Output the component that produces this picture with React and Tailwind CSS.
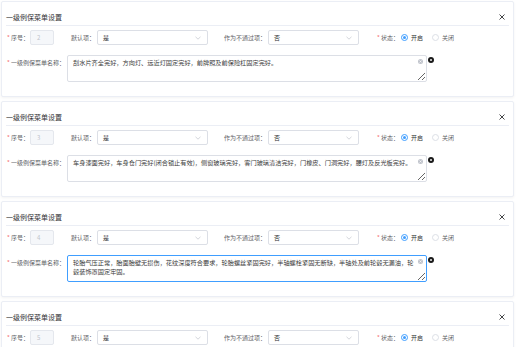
import React from 'react';

const cards = [
  {
    no: '2',
    text: '刮水片齐全完好，方向灯、远近灯固定完好，前牌照及前保险杠固定完好。',
    focus: false,
  },
  {
    no: '3',
    text: '车身漆面完好，车身仓门完好(闭合锁止有效)，侧窗玻璃完好，客门玻璃清洁完好，门橡皮、门洞完好，腰灯及反光板完好。',
    focus: false,
  },
  {
    no: '4',
    text: '轮胎气压正常，胎面胎壁无损伤，花纹深度符合要求，轮胎螺丝紧固完好，半轴螺栓紧固无断缺，半轴处及前轮毂无漏油，轮毂装饰罩固定牢固。',
    focus: true,
  },
  {
    no: '5',
    text: '',
    focus: false,
  },
];

function Chevron() {
  return (
    <svg width="6" height="4" viewBox="0 0 6 4" className="shrink-0">
      <polyline points="0.5,0.8 3,3.2 5.5,0.8" fill="none" stroke="#c0c4cc" strokeWidth="0.7" />
    </svg>
  );
}

function Select({ value, width }) {
  return (
    <div className={`ml-[2px] h-[15px] ${width} border border-[#dcdfe6] rounded-[2px] bg-white flex items-center justify-between pl-[5px] pr-[6px]`}>
      <span className="text-[#303133]">{value}</span>
      <Chevron />
    </div>
  );
}

function Card({ no, text, focus }) {
  return (
    <div className="ml-[1px] w-[513px] h-[96px] shrink-0 bg-white border border-[#ebeef5] rounded-[2px] shadow-[0_1px_3px_rgba(0,0,0,0.05)]">
      <div className="mx-[4px] pt-[10px] pb-[3px] border-b border-[#ebeef5] flex items-center justify-between">
        <span className="text-[7px] leading-[10px] text-[#303133]">一级例保菜单设置</span>
        <svg width="6" height="6" viewBox="0 0 6 6" className="mr-[4px]">
          <path d="M0.5 0.5 L5.5 5.5 M5.5 0.5 L0.5 5.5" stroke="#303133" strokeWidth="0.9" />
        </svg>
      </div>

      <div className="mt-[4px] pl-[5px] flex items-center h-[15px] text-[6px] leading-[9px] text-[#606266]">
        <span className="text-[#f56c6c] w-[4px]">*</span>
        <span>序号：</span>
        <div className="ml-[1px] w-[24px] h-[15px] bg-[#f5f7fa] border border-[#e4e7ed] rounded-[2px] flex items-center pl-[6px] text-[#c0c4cc]">
          {no}
        </div>
        <span className="ml-[17px]">默认项：</span>
        <Select value="是" width="w-[111px]" />
        <span className="ml-[16px]">作为不通过项：</span>
        <Select value="否" width="w-[91px]" />
        <span className="ml-[18px] text-[#f56c6c] w-[4px]">*</span>
        <span>状态：</span>
        <span className="ml-[2px] w-[7px] h-[7px] rounded-full border border-[#409eff] flex items-center justify-center">
          <span className="w-[3px] h-[3px] rounded-full bg-[#409eff]"></span>
        </span>
        <span className="ml-[3px] text-[#303133]">开启</span>
        <span className="ml-[9px] w-[7px] h-[7px] rounded-full border border-[#dcdfe6] bg-white"></span>
        <span className="ml-[3px] text-[#606266]">关闭</span>
      </div>

      <div className="mt-[10px] pl-[5px] flex items-start text-[6px] leading-[9px] text-[#606266]">
        <span className="text-[#f56c6c] w-[4px] mt-[3px]">*</span>
        <span className="mt-[3px]">一级例保菜单名称：</span>
        <div className="relative ml-[2px]">
          <textarea
            readOnly
            value={text}
            className={`block w-[360px] h-[27px] border ${focus ? 'border-[#409eff]' : 'border-[#dcdfe6]'} rounded-[2px] bg-white pl-[5px] pr-[12px] pt-[2px] text-[6.2px] leading-[9px] text-[#3a3a3a] outline-none overflow-hidden font-['Noto_Sans_CJK_SC',sans-serif]`}
          />
          <span className="absolute right-[4px] top-[4px] w-[5px] h-[5px] rounded-full bg-[#c0c4cc] flex items-center justify-center">
            <svg width="3" height="3" viewBox="0 0 3 3">
              <path d="M0.5 0.5 L2.5 2.5 M2.5 0.5 L0.5 2.5" stroke="#fff" strokeWidth="0.6" />
            </svg>
          </span>
        </div>
        <span className="ml-[1px] mt-[2px] w-[6px] h-[6px] rounded-full bg-[#1a1a1a] flex items-center justify-center">
          <svg width="4" height="4" viewBox="0 0 4 4">
            <path d="M1 1 L3 3 M3 1 L1 3" stroke="#fff" strokeWidth="0.7" />
          </svg>
        </span>
      </div>
    </div>
  );
}

export default function App() {
  return (
    <div className="w-[519px] h-[347px] overflow-hidden bg-white font-['Noto_Sans_CJK_SC',sans-serif]">
      <div className="pt-[1px] flex flex-col gap-[4px]">
        {cards.map((c) => (
          <Card key={c.no} no={c.no} text={c.text} focus={c.focus} />
        ))}
      </div>
    </div>
  );
}
